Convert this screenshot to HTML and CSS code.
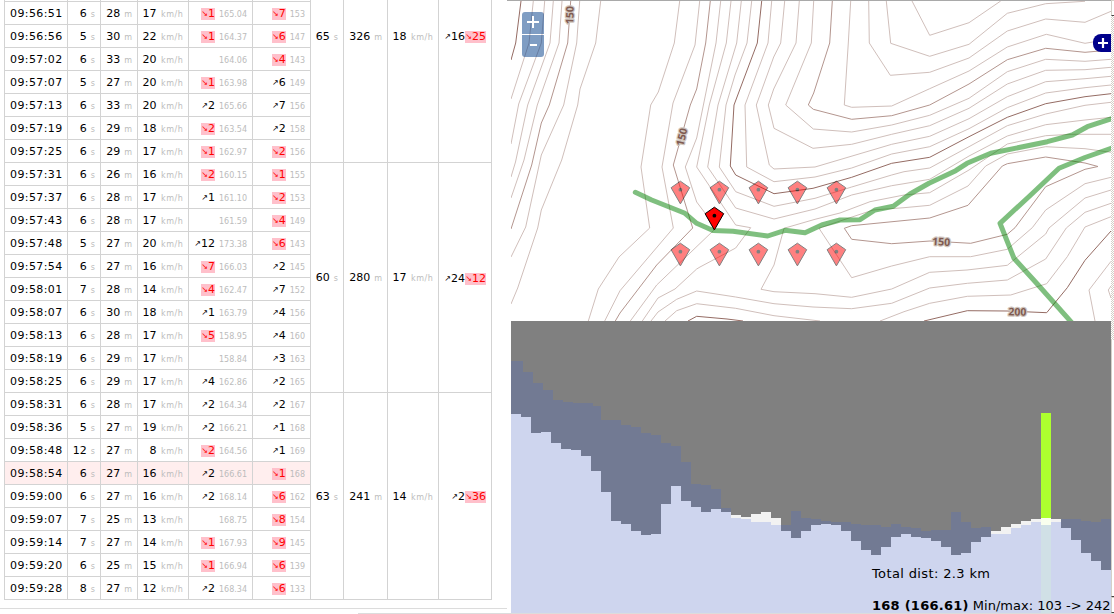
FILE: index.html
```html
<!DOCTYPE html>
<html lang="en">
<head>
<meta charset="utf-8">
<title>Track splits</title>
<link rel="stylesheet" href="styles.css">
</head>
<body>
<main class="workspace">
  <section class="splits-pane">
    <table class="splits">
      <colgroup>
        <col class="c-time"><col class="c-sec"><col class="c-dist"><col class="c-speed"><col class="c-alt"><col class="c-ele">
        <col class="c-sec"><col class="c-sumdist"><col class="c-speed"><col class="c-climb">
      </colgroup>
      <tbody id="splits-body"></tbody>
    </table>
  </section>

  <section class="side">
    <div class="map">
      <svg class="map-canvas" width="600" height="320" viewBox="511 1 600 320">
        <g class="contour">
          <path d="M533.3 1L529 43 511 99"/>
          <path d="M544.7 1L541.3 43 518.7 104 511 144"/>
          <path d="M553.3 1L550 43 527.7 105 515.5 162 511 177"/>
          <path d="M562 1L559 43 537.3 105 524 160 511 198"/>
          <path d="M579.7 1L576.7 43 563.7 105 541.3 155 525.7 227 511 257"/>
          <path d="M600.7 1L595.7 43 580 89 577.7 105 561.7 160 541.3 210 537.7 228 517.7 288 511 304"/>
          <path d="M679.7 1L674.3 43 658.3 92 650.7 105 641 167 649.7 228 619 257 598.3 289 588.3 321"/>
          <path d="M699.7 1L695 45 673 103 662 167 673.3 228 620 290.7 604.7 321"/>
          <path d="M720.7 1L716 43 696.7 138 685.3 167 696.7 202 705 213 714 230 656.7 285 630.3 321"/>
          <path d="M731 1L726.3 43 709.3 105 696.7 167 735.7 225 750.7 227.7 735.7 248 700 267 696.7 269 675 289 658 298 642.3 321"/>
          <path d="M741.3 1L736.7 43 718 105 707.7 167 735.7 208 774 219 815 209 851.7 195 891.7 185.7 904 183.7 929.7 179.3 969 156 1007.3 136 1045.7 124.7 1085 120 1111 117.3"/>
          <path d="M751.7 1L747 43 735 75 726 105 719.3 167 735.7 191.7 774 206.3 815 198.3 851.7 187 891.7 175 904 171.7 929.7 168 969 146.7 1007.3 125.7 1045.7 114 1085 105.3 1111 102.3"/>
          <path d="M771.7 1L768 43 745 105 746.7 167 774 181.7 815 177 851.7 168 891.7 154 929.7 146.7 969 128.7 1007.3 107.7 1045.7 93 1085 87.7 1111 85"/>
          <path d="M784.7 1L780.7 43 773.7 57 756.3 105 769.3 165 774 169 815 167 891.7 144.3 929.7 136.3 969 118.7 1007.3 96.7 1045.7 81.7 1085 78.7 1111 76.3"/>
          <path d="M799.3 1L796 43 773.7 89 768.3 105 774 128.3 813 148.3 851.7 144.3 891.7 134.3 929.7 125.7 969 108.3 1007.3 84 1045.7 70.3 1085 69.7 1111 67.3"/>
          <path d="M813.7 1L811.3 43 785.7 105 813.3 129 851.7 132 891.7 125 929.7 115.3 969 98.3 1007.3 71.7 1045.7 59.3 1085 61.3 1111 59.3"/>
          <path d="M850.7 1L848.3 43 844.3 105 851.7 107.3 891.7 106 929.7 88.7 969 71 1007.3 47 1046.3 34.3 1085 43.3 1111 39"/>
          <path d="M868.7 1L869.3 43 890.3 75.3 929.7 72.3 969 58 1007.3 31 1045.7 19 1085 22.3 1111 11.3"/>
          <path d="M886.3 1L890.7 43.3 929.7 56.3 969 44.3 1007.3 13.3 1045.7 3.7 1085 1.3"/>
          <path d="M912 1L929.7 35.3 969 22.7 1000.7 1"/>
          <path d="M1111 134.3L1071 134.3 1045.7 135.7 1007.3 144 969 170 929.7 192.7 904 195 870 201.7 840 213 815 219.3 784 228.3 774 265 761 289.3 774 291.7 815 293.7 851.7 297.3 891.7 289 929.7 272.3 967 270 1007.3 265.3 1045.7 234 1049 228 1085 198 1111 190"/>
          <path d="M1111 152.3L1085 148.7 1045.7 146.7 1007.3 154 985.7 166 968 186 929.7 205.3 904 207.7 873 210 843 220 819 228.3 851.7 277.7 891.7 266 929.7 256.7 970.7 256.7 1007.3 249.3 1032.3 227.7 1045.7 210 1085 183.7 1111 177.3"/>
          <path d="M1111 203.3L1085 212.3 1066.3 228 1045.7 259 1007.3 280 967.3 283.3 929.7 288 891.7 303.3 851.7 308.7 813 307 774 303.7 735.7 297 696.7 291 676.7 299.3 658 312 651 321"/>
          <path d="M1111 216.7L1085 227 1067.3 256.7 1046.7 283.7 1010.7 295 967.3 296.3 929.7 303.3 904 311.7 880 321"/>
          <path d="M820 321L774 315.7 735.7 308.3 696.7 303.7 676.7 310.7 665 321"/>
          <path d="M1111 261.3L1089 290 1095 321M1111 286L1108.3 290 1111 298"/>
        </g>
        <g class="contour contour-mid">
          <path d="M570.7 1L567.7 43 549.3 105 541.3 123 531.7 165 511 229"/>
          <path d="M710.3 1L705.7 43 696.7 89 690.3 105 673.3 165 692.7 228 656.7 265 620 313 615.3 321"/>
          <path d="M832.3 1L829.7 43 813.7 93 808.3 105 813.3 109.3 851.7 119.3 891.7 115.7 929.7 105 969 84 1007.3 59.7 1045.7 48.3 1085 52.3 1111 50"/>
          <path d="M1098 166.5L1085 163 1045.7 157 1007.3 163.7 1002.3 166 968 205.3 929.7 218 851.7 225.7 844.3 228.3 851.7 239.3 891.7 243.7 930 241 970.7 243.3 1007.3 234.3 1015 227.7 1045.7 186.7 1085 169.3Z"/>
        </g>
        <g class="contour contour-major">
          <path d="M521 1L515.7 43 511 60"/>
          <path d="M761.7 1L757.3 43 734 105 730.3 166 735.7 175 774 193.7 813 188.3 851.7 177.3 891.7 163.3 929.7 157.3 969 136.7 1007.3 117.3 1045.7 103.7 1085 96.7 1111 93.7"/>
          <path d="M1111 231L1085 260.3 1067.3 287.7 1046.7 312.7 1007 311 967.3 310.7 924 321"/>
          <path d="M688 321L696.7 316.3 727 319 743 321"/>
        </g>
        <g class="contour-label">
          <text transform="translate(569.7 15) rotate(-88)" y="3.8">150</text>
          <text transform="translate(681.7 137) rotate(-76)" y="3.8">150</text>
          <text transform="translate(941.3 241.7) rotate(3)" y="3.8">150</text>
          <text transform="translate(1017.3 311.7) rotate(2)" y="3.8">200</text>
        </g>
        <g class="track">
          <path d="M635.3 192.3L651.7 200 685 213.3 696.7 223.3 713 230.5 733 231.3 767.7 236 785 230.3 805 232.7 821.7 225 840 220 860 219.7 875 210 893.3 206.3 910 194 929 183.3 955.7 170.7 967 163.3 990.7 153.3 1047.3 141.7 1072.3 135 1087.3 126.7 1114 118"/>
          <path d="M1114 147.3L1085 157.5 1059 168.3 1030.7 195 1000 223.3 1014 258.3 1037.3 284 1073 324"/>
        </g>
        <defs>
          <g id="pin"><path class="pin-shape" d="M0 -8.5L9.3 -2 0 14.2 -9.3 -2Z"/><circle r="1.9"/></g>
        </defs>
        <g class="pin-faded">
          <use href="#pin" x="680.4" y="189.7"/><use href="#pin" x="719.4" y="189.7"/><use href="#pin" x="758.4" y="189.7"/><use href="#pin" x="797.4" y="189.7"/><use href="#pin" x="836.4" y="189.7"/>
          <use href="#pin" x="680.4" y="251.7"/><use href="#pin" x="719.4" y="251.7"/><use href="#pin" x="758.4" y="251.7"/><use href="#pin" x="797.4" y="251.7"/><use href="#pin" x="836.4" y="251.7"/>
        </g>
        <use href="#pin" x="714.4" y="215.7"/>
      </svg>
      <div class="zoom-control">
        <button class="zoom-button" aria-label="Zoom in"><svg width="12" height="12"><path d="M0 6H12M6 0V12"/></svg></button>
        <button class="zoom-button" aria-label="Zoom out"><svg width="12" height="12"><path d="M3 6H10"/></svg></button>
      </div>
      <button class="layer-toggle" aria-label="Layers"><svg width="10" height="10"><path d="M0 5H10M5 0V10"/></svg></button>
    </div>

    <div class="profile">
      <svg class="profile-canvas" width="600" height="292" viewBox="511 321 600 292" shape-rendering="crispEdges">
        <path class="profile-ground" d="M511 613V361H523V372H533V383H543V390H553V400H563V402H573V403H593V406H601V420H621V425H631V427H641V433H651V435H661V443H671V446H681V462H691V484H701V485H711V489H721V508H731V525H781V525H791V511H801V518H811V519H821V521H831V522H851V524H861V525H881V527H891V524H901V527H911V528H921V531H931V530H951V512H961V522H971V528H981V527H991V540H1061V519H1081V521H1091V522H1101V519H1111V613Z"/>
        <path class="profile-above" d="M731 540V515H741V517H751V514H761V512H771V518H781V540ZM991 545V531H1001V527H1011V524H1021V521H1031V519H1041V518H1051V519H1061V540Z"/>
        <path class="profile-track" d="M511 613V414H521V417H531V433H541V432H551V443H561V449H571V450H581V456H591V471H601V492H611V521H621V524H631V531H641V535H651V534H661V504H671V486H681V501H691V507H701V512H711V509H721V512H731V518H741V519H751V522H771V525H781V531H791V538H801V531H811V525H821V524H831V525H841V531H851V541H861V550H871V555H881V547H891V537H901V534H911V537H921V538H931V541H941V547H951V555H961V553H971V542H981V537H991V534H1011V528H1021V525H1031V522H1041V525H1051V522H1061V528H1071V540H1081V553H1091V561H1101V570H1111V613Z"/>
        <path class="cursor" d="M1041 413H1051V518H1041Z"/>
        <path class="cursor-above" d="M1041 518H1051V525H1041Z"/>
        <path class="cursor-track" d="M1041 525H1051V613H1041Z"/>
      </svg>
      <div class="profile-info">
        <p class="total">Total dist: 2.3 km</p>
        <p class="current"><b>168 (166.61)</b> <span>Min/max: 103 -&gt; 242</span></p>
      </div>
    </div>
  </section>

  <div class="scrollbar">
    <div class="scroll-button"></div>
    <div class="scroll-track"></div>
    <div class="scroll-thumb"></div>
    <div class="scroll-button scroll-down"></div>
  </div>
</main>
<footer class="status-edge"></footer>
<script src="script.js"></script>
</body>
</html>
```

FILE: styles.css
```css
* { box-sizing: border-box; }

body {
  margin: 0;
  width: 1114px;
  height: 614px;
  overflow: hidden;
  background: #fff;
  color: #000;
  font-family: Verdana, "DejaVu Sans", sans-serif;
  font-size: 11px;
}

.workspace { display: flex; height: 613px; }

.status-edge { height: 1px; margin-left: 358px; background: #dcdcdc; }

/* Splits table */
.splits-pane {
  display: flex;
  flex-direction: column;
  justify-content: flex-end;
  width: 507px;
  height: 609px;
  padding: 0 0 8px 4px;
  overflow: hidden;
  border-bottom: 1px solid #dcdcdc;
}

.splits {
  flex: none;
  width: 488px;
  table-layout: fixed;
  border-collapse: separate;
  border-spacing: 0;
  border-left: 1px solid #d3d3d3;
}

.c-time { width: 63px; }
.c-sec { width: 33px; }
.c-dist { width: 37px; }
.c-speed { width: 51px; }
.c-alt { width: 64px; }
.c-ele { width: 58px; }
.c-sumdist { width: 44px; }
.c-climb { width: 53px; }

.splits td {
  height: 23px;
  padding: 1px 5px 0 0;
  border-right: 1px solid #d3d3d3;
  border-bottom: 1px solid #d3d3d3;
  line-height: 13px;
  text-align: right;
  white-space: nowrap;
}

.splits .earlier td { height: 92px; }
.splits td.time { padding-left: 5px; text-align: left; letter-spacing: 0.4px; }
.current-row td:not(.summary) { background: #fee; }

.unit { margin-left: 4px; color: #bcbcbc; font-size: 8px; }
.unit-speed { margin-left: 4.4px; letter-spacing: 0.55px; margin-right: -0.4px; }

.delta { display: inline-block; height: 12px; line-height: 12px; vertical-align: middle; }
.delta.down { background: #ffc0cb; color: #f00; }
.arrow { display: inline-block; width: 7px; font-size: 8px; line-height: 12px; vertical-align: top; }

/* Map */
.side { width: 604px; border-top: 1px solid #a9a9a9; padding-left: 4px; }

.map { position: relative; height: 320px; overflow: hidden; }
.map-canvas, .profile-canvas { display: block; }

.contour { fill: none; stroke: #d0bfbb; stroke-width: 1; }
.contour-mid { stroke: #b4968f; }
.contour-major { stroke: #956c64; }

.contour-label {
  font: bold 10.5px "Noto Sans", sans-serif;
  text-anchor: middle;
  fill: #7f5a50;
  stroke: #cfc5bd;
  stroke-width: 2.4px;
  stroke-linejoin: round;
  paint-order: stroke;
}

.track { fill: none; stroke: #008000; stroke-width: 5; stroke-linecap: round; stroke-linejoin: round; opacity: 0.5; }

.pin-shape { fill: #f00; stroke: #000; stroke-width: 1; }
.pin-faded { opacity: 0.5; }

.zoom-control {
  position: absolute;
  left: 11px;
  top: 11px;
  display: grid;
  gap: 1px;
}

.zoom-button {
  display: grid;
  place-content: center;
  width: 22px;
  height: 22px;
  padding: 0 0 2px;
  border: 0;
  border-radius: 3px 3px 0 0;
  background: rgba(0, 60, 136, 0.5);
}
.zoom-button + .zoom-button { border-radius: 0 0 3px 3px; }
.zoom-button path { stroke: #fff; stroke-width: 2; }

.layer-toggle {
  position: absolute;
  right: 0;
  top: 33px;
  display: grid;
  place-content: center;
  width: 18px;
  height: 18px;
  padding: 0 0 0 2px;
  border: 0;
  border-radius: 8px 0 0 8px;
  background: #00008b;
}
.layer-toggle path { stroke: #fff; stroke-width: 2.2; }

/* Elevation profile */
.profile { position: relative; height: 292px; background: #808080; }
.profile-ground { fill: #727a93; }
.profile-above { fill: #f2f2f2; }
.profile-track { fill: #ced5ee; }
.cursor { fill: #adff2f; }
.cursor-above { fill: #f9ffee; }
.cursor-track { fill: #d0e0e6; }

.profile-info {
  position: absolute;
  left: 361px;
  bottom: -1px;
  display: grid;
  gap: 16px;
  font-size: 13px;
  line-height: 16px;
  white-space: nowrap;
}
.profile-info p { margin: 0; }
.profile-info b { letter-spacing: 0.25px; }
.total { letter-spacing: 0.37px; }

/* Scrollbar */
.scrollbar { display: flex; flex-direction: column; width: 3px; }
.scroll-button { height: 16px; background: #fff; border: solid #d4d0c8; border-width: 1px 0 0 1px; border-bottom: 1px solid #404040; }
.scroll-track { height: 324px; background: repeating-conic-gradient(#d4d0c8 0 25%, #fff 0 50%) 0 0 / 2px 2px; }
.scroll-thumb { flex: 1; background: #fff; border-left: 1px solid #d4d0c8; border-bottom: 1px solid #404040; }
```

FILE: script.js
```js
// time, seconds, metres, km/h, altitude change, altitude, terrain change, terrain
const splits = [
  ["09:56:51", 6, 28, 17, -1, "165.04", -7, 153],
  ["09:56:56", 5, 30, 22, -1, "164.37", -6, 147],
  ["09:57:02", 6, 33, 20, 0, "164.06", -4, 143],
  ["09:57:07", 5, 27, 20, -1, "163.98", 6, 149],
  ["09:57:13", 6, 33, 20, 2, "165.66", 7, 156],
  ["09:57:19", 6, 29, 18, -2, "163.54", 2, 158],
  ["09:57:25", 6, 29, 17, -1, "162.97", -2, 156],
  ["09:57:31", 6, 26, 16, -2, "160.15", -1, 155],
  ["09:57:37", 6, 28, 17, 1, "161.10", -2, 153],
  ["09:57:43", 6, 28, 17, 0, "161.59", -4, 149],
  ["09:57:48", 5, 27, 20, 12, "173.38", -6, 143],
  ["09:57:54", 6, 27, 16, -7, "166.03", 2, 145],
  ["09:58:01", 7, 28, 14, -4, "162.47", 7, 152],
  ["09:58:07", 6, 30, 18, 1, "163.79", 4, 156],
  ["09:58:13", 6, 28, 17, -5, "158.95", 4, 160],
  ["09:58:19", 6, 29, 17, 0, "158.84", 3, 163],
  ["09:58:25", 6, 29, 17, 4, "162.86", 2, 165],
  ["09:58:31", 6, 28, 17, 2, "164.34", 2, 167],
  ["09:58:36", 5, 27, 19, 2, "166.21", 1, 168],
  ["09:58:48", 12, 27, 8, -2, "164.56", 1, 169],
  ["09:58:54", 6, 27, 16, 2, "166.61", -1, 168],
  ["09:59:00", 6, 27, 16, 2, "168.14", -6, 162],
  ["09:59:07", 7, 25, 13, 0, "168.75", -8, 154],
  ["09:59:14", 7, 27, 14, -1, "167.93", -9, 145],
  ["09:59:20", 6, 25, 15, -1, "166.94", -6, 139],
  ["09:59:28", 8, 27, 12, 2, "168.34", -6, 133],
];

// Minute summaries, keyed by the index of the row they start on (-1: the earlier rows)
const summaries = {
  "-1": { rows: 8, values: [65, 326, 18, 16, -25] },
  7: { rows: 10, values: [60, 280, 17, 24, -12] },
  17: { rows: 9, values: [63, 241, 14, 2, -36] },
};
const currentTime = "09:58:54";

const unit = (value, name, cls = "") => `${value}<span class="unit ${cls}">${name}</span>`;
const delta = (n) => n === 0 ? "" :
  `<span class="delta ${n < 0 ? "down" : "up"}"><span class="arrow">${n < 0 ? "↘" : "↗"}</span>${Math.abs(n)}</span>`;
const cell = (html, cls = "", rows = 1) => `<td class="${cls}" rowspan="${rows}">${html}</td>`;

function summaryCells(index) {
  const s = summaries[index];
  if (!s) return "";
  const [sec, dist, speed, up, down] = s.values;
  return [unit(sec, "s"), unit(dist, "m"), unit(speed, "km/h", "unit-speed"), delta(up) + delta(down)]
    .map((html) => cell(html, "summary", s.rows)).join("");
}

let html = `<tr class="earlier">${cell("").repeat(6)}${summaryCells(-1)}</tr>`;
splits.forEach(([time, sec, dist, speed, dAlt, alt, dEle, ele], i) => {
  html += `<tr class="${time === currentTime ? "current-row" : ""}">` +
    cell(time, "time") + cell(unit(sec, "s")) + cell(unit(dist, "m")) +
    cell(unit(speed, "km/h", "unit-speed")) +
    cell(delta(dAlt) + unit("", alt)) + cell(delta(dEle) + unit("", ele)) +
    summaryCells(i) + "</tr>";
});
document.getElementById("splits-body").innerHTML = html;
```
